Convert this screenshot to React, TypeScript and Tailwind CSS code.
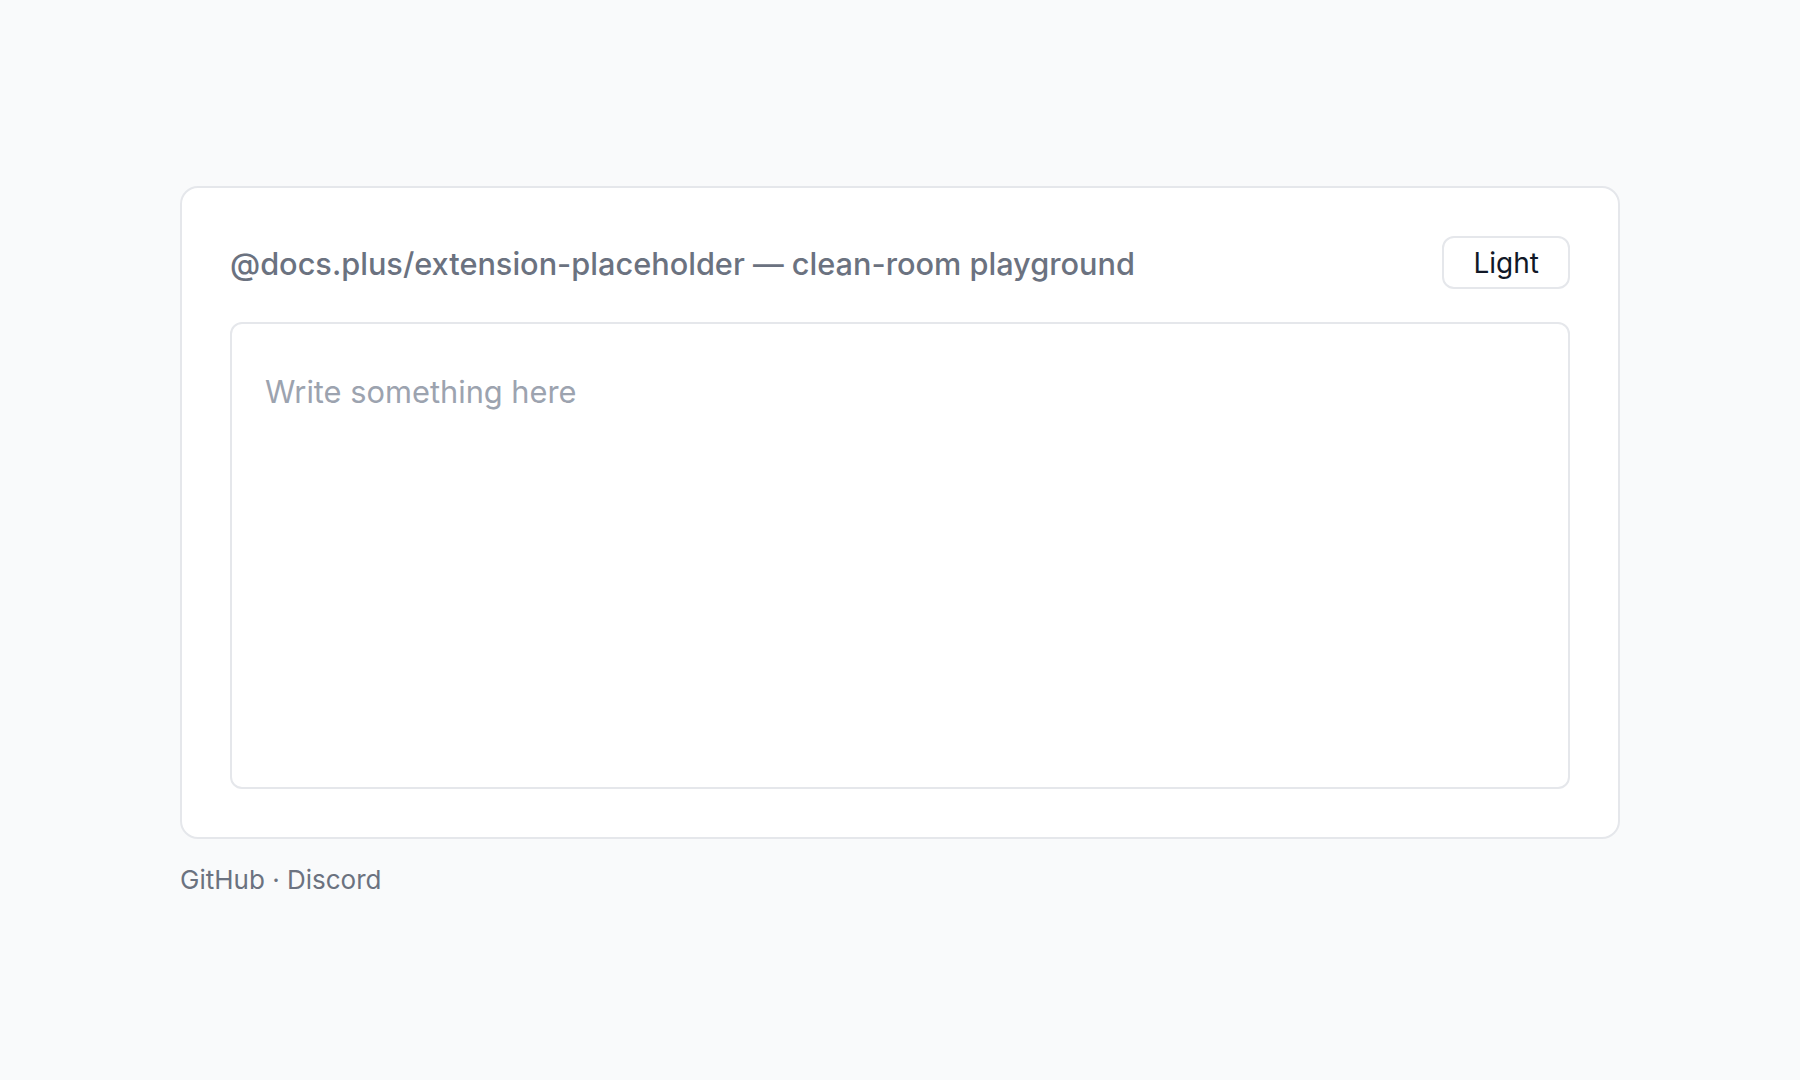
export default function App() {
  return (
    <div className="min-h-screen bg-[#f9fafb] font-['Inter',sans-serif]">
      <div className="mx-auto w-[1440px] pt-[186px]">
        <div className="rounded-[18px] border-2 border-[#e5e7eb] bg-white p-[48px]">
          <div className="flex h-[53px] items-center justify-between">
            <h1 className="pt-[3px] text-[30.7px] font-medium text-[#6b7280]">
              @docs.plus/extension-placeholder — clean-room playground
            </h1>
            <button className="h-[53px] rounded-[12px] border-2 border-[#e5e7eb] bg-white px-[29px] text-[28px] text-[#111827]">
              Light
            </button>
          </div>
          <div className="mt-[33px] h-[467px] rounded-[12px] border-2 border-[#e5e7eb] bg-white px-[33px] pt-[50px]">
            <p className="text-[30.8px] leading-[1.2] text-[#9ca3af]">Write something here</p>
          </div>
        </div>
        <div className="mt-[21px] text-[26px] text-[#6b7280]">
          <a>GitHub</a> · <a>Discord</a>
        </div>
      </div>
    </div>
  );
}
